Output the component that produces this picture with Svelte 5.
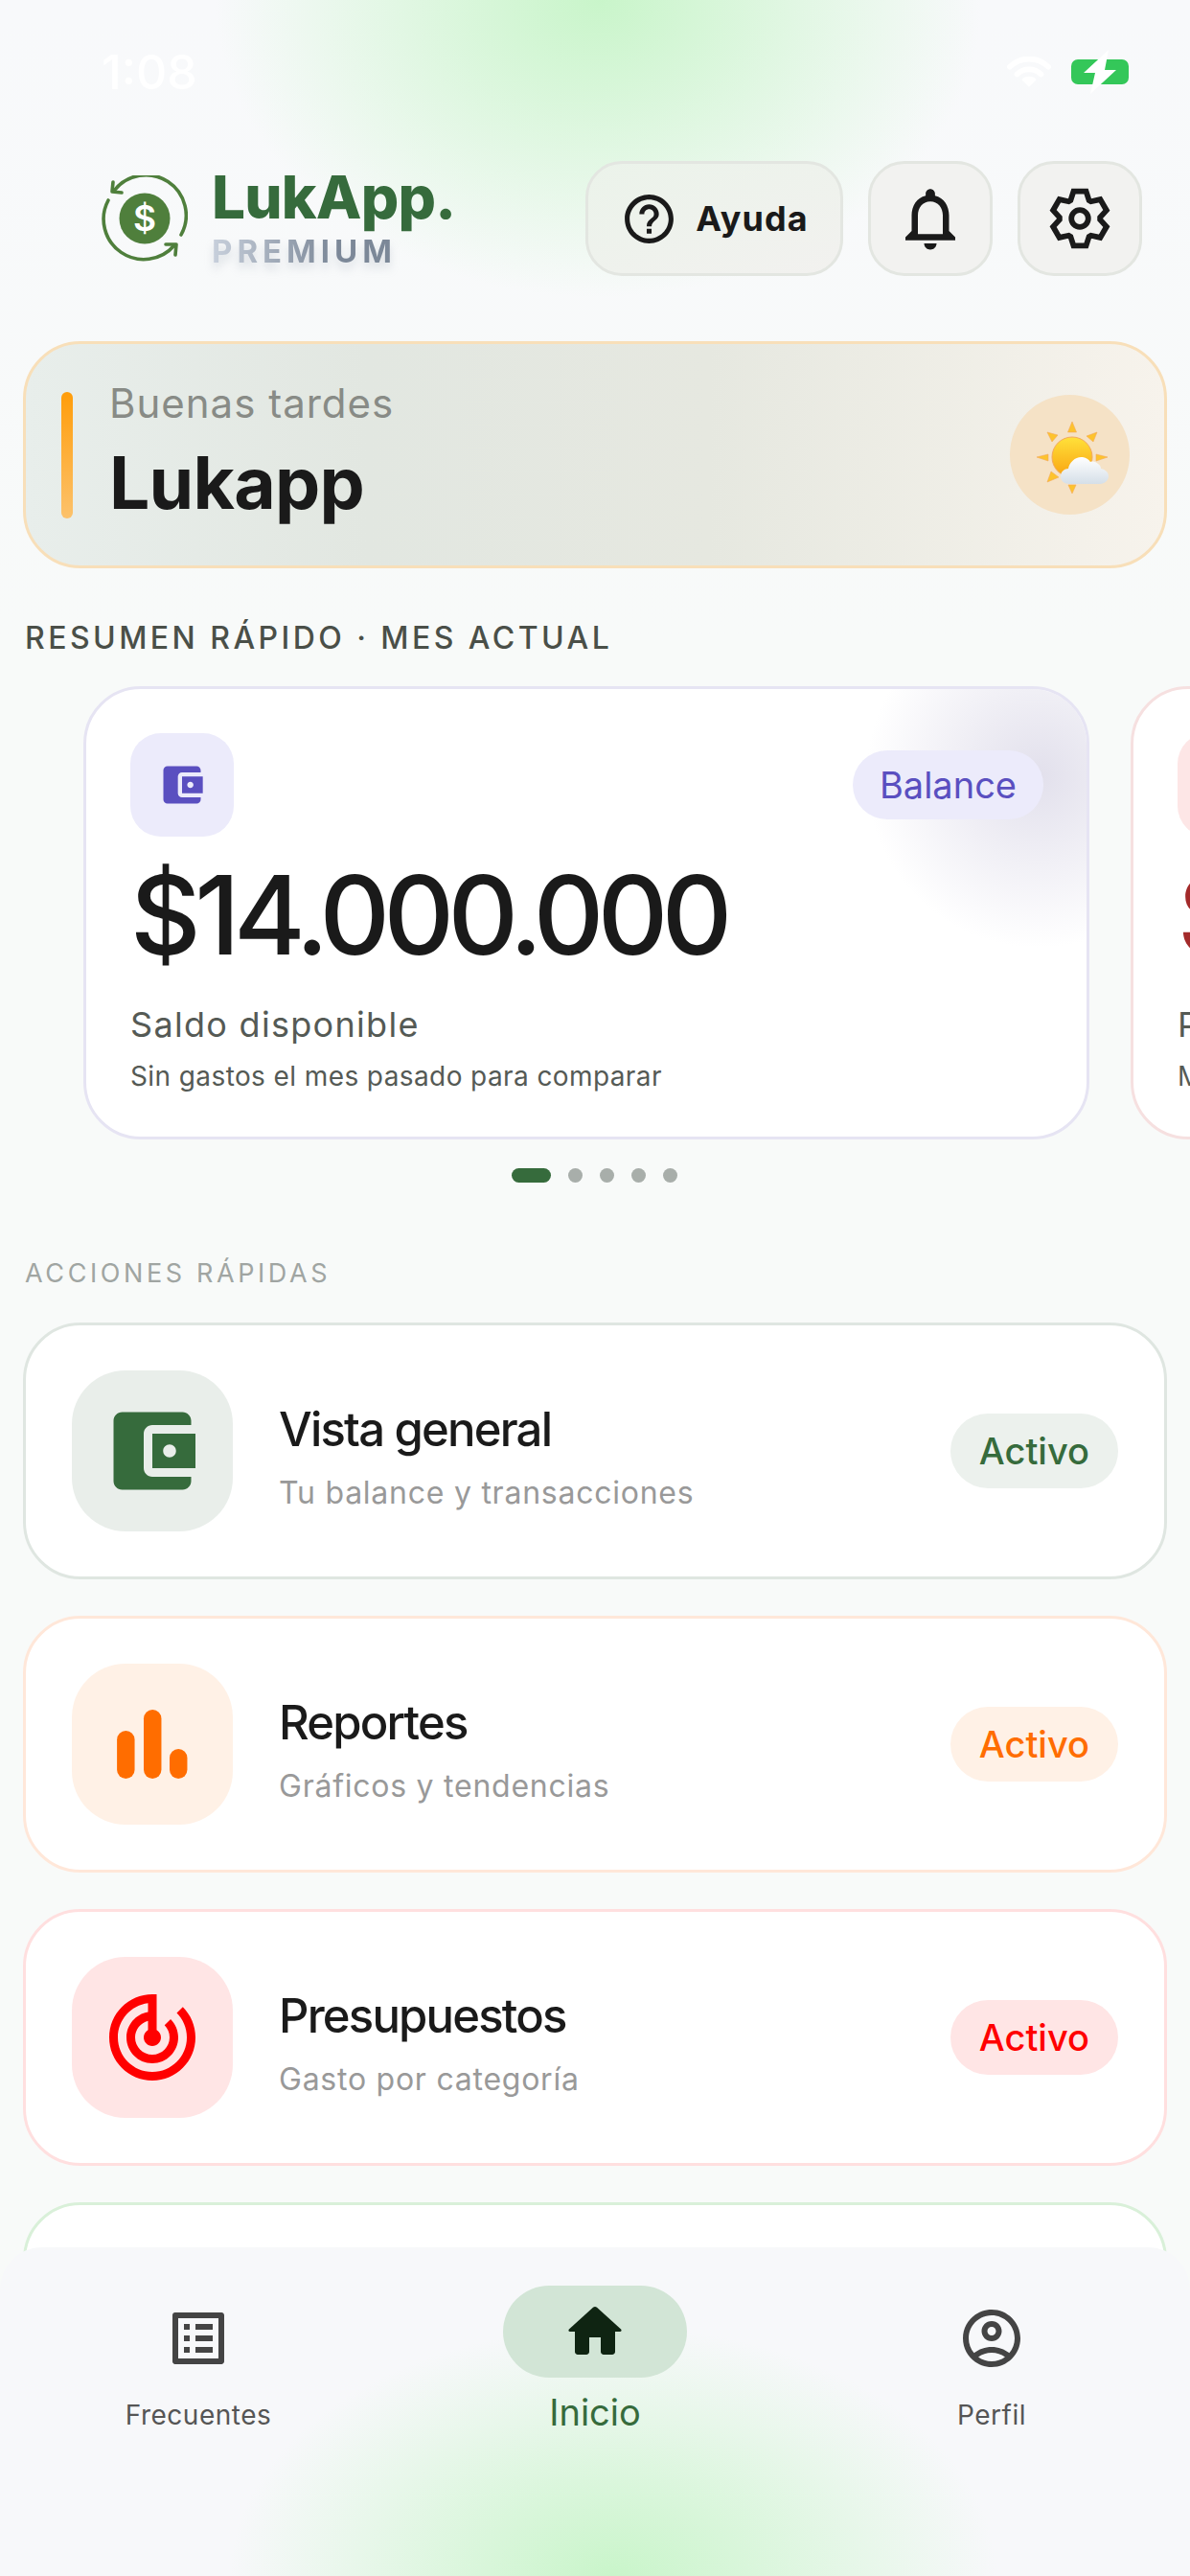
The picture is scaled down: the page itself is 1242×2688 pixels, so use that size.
<script>
	const actions = [
		{ title: 'Vista general', sub: 'Tu balance y transacciones', tone: 'green', icon: 'wallet' },
		{ title: 'Reportes', sub: 'Gráficos y tendencias', tone: 'orange', icon: 'bars' },
		{ title: 'Presupuestos', sub: 'Gasto por categoría', tone: 'red', icon: 'radar' }
	]
	const wallet = 'M21 18v1c0 1.1-.9 2-2 2H5c-1.11 0-2-.9-2-2V5c0-1.1.89-2 2-2h14c1.1 0 2 .9 2 2v1h-9c-1.11 0-2 .9-2 2v8c0 1.1.89 2 2 2h9zm-9-2h10V8H12v8zm4-2.5c-.83 0-1.5-.67-1.5-1.5s.67-1.5 1.5-1.5 1.5.67 1.5 1.5-.67 1.5-1.5 1.5z'
	const radar = 'M19.07 4.93l-1.41 1.41C19.1 7.79 20 9.79 20 12c0 4.42-3.58 8-8 8s-8-3.58-8-8c0-4.08 3.05-7.44 7-7.93v2.02C8.16 6.57 6 9.03 6 12c0 3.31 2.69 6 6 6s6-2.69 6-6c0-1.66-.67-3.16-1.76-4.24l-1.41 1.41C15.55 9.9 16 10.9 16 12c0 2.21-1.79 4-4 4s-4-1.79-4-4c0-1.86 1.28-3.41 3-3.86v2.14c-.6.35-1 .98-1 1.72 0 1.1.9 2 2 2s2-.9 2-2c0-.74-.4-1.38-1-1.72V2h-1C6.48 2 2 6.48 2 12s4.48 10 10 10 10-4.48 10-10c0-2.76-1.12-5.26-2.93-7.07z'

	// six flat teeth, built instead of hand-typed
	const polar = (r, deg) => {
		const a = ((deg - 90) * Math.PI) / 180
		return `${(12 + r * Math.cos(a)).toFixed(2)} ${(12 + r * Math.sin(a)).toFixed(2)}`
	}
	const cog = [0, 60, 120, 180, 240, 300]
		.map((t) => [polar(7.7, t - 27), polar(10.6, t - 13), polar(10.6, t + 13), polar(7.7, t + 27)].join(' L'))
		.join(' L')
</script>

<div class="screen">
	<div class="glow glow-top"></div>

	<div class="status">
		<span class="time">1:08</span>
		<div class="status-icons">
			<svg class="wifi" viewBox="0 0 48 34" aria-hidden="true">
				<path d="M3 11a30 30 0 0 1 42 0M11 19a19 19 0 0 1 26 0" fill="none" stroke="#fff" stroke-width="6" stroke-linecap="round" />
				<path d="M24 33l-8-8a11 11 0 0 1 16 0z" fill="#fff" />
			</svg>
			<svg class="battery" viewBox="0 0 66 32" aria-hidden="true">
				<rect x="3" y="3" width="60" height="26" rx="7" fill="#34c759" />
				<path d="M42 -7L16 17H28L23 39L50 14H38z" fill="#fff" />
			</svg>
		</div>
	</div>

	<header class="top">
		<div class="brand">
			<svg class="logo" viewBox="0 0 90 90" aria-hidden="true">
				<circle cx="45" cy="45" r="26.500" fill="#4f7f3c" />
				<text x="45" y="58" text-anchor="middle" class="logo-sign">$</text>
				<g fill="none" stroke="#4f7f3c" stroke-width="3.600" stroke-linecap="round" stroke-linejoin="round">
					<path d="M13 16A42 42 0 0 1 83 62" />
					<path d="M7 26A42 42 0 0 0 76 73" />
					<path d="M12 7L11 17L21 18" />
					<path d="M67 72L78 72L77 83" />
				</g>
			</svg>
			<div class="brand-text">
				<span class="brand-name">LukApp.</span>
				<span class="brand-tier">PREMIUM</span>
			</div>
		</div>
		<div class="top-actions">
			<button class="top-btn help">
				<svg viewBox="0 0 24 24" width="61" height="61" aria-hidden="true"><path d="M11 18h2v-2h-2v2zm1-16C6.48 2 2 6.48 2 12s4.48 10 10 10 10-4.48 10-10S17.520 2 12 2zm0 18c-4.410 0-8-3.590-8-8s3.590-8 8-8 8 3.590 8 8-3.590 8-8 8zm0-14c-2.210 0-4 1.790-4 4h2c0-1.100.9-2 2-2s2 .9 2 2c0 2-3 1.750-3 5h2c0-2.250 3-2.500 3-5 0-2.210-1.790-4-4-4z" /></svg>
				<span>Ayuda</span>
			</button>
			<button class="top-btn square" aria-label="Notificaciones">
				<svg viewBox="0 0 24 24" width="78" height="78" aria-hidden="true"><path d="M12 22c1.100 0 2-.9 2-2h-4c0 1.100.9 2 2 2zm6-6v-5c0-3.070-1.630-5.640-4.500-6.320V4c0-.83-.67-1.500-1.500-1.500s-1.500.67-1.500 1.500v.68C7.640 5.360 6 7.920 6 11v5l-2 2v1h16v-1l-2-2zm-2 1H8v-6c0-2.480 1.510-4.500 4-4.500s4 2.020 4 4.500v6z" /></svg>
			</button>
			<button class="top-btn square" aria-label="Ajustes">
				<svg class="gear" viewBox="0 0 24 24" width="66" height="66" aria-hidden="true">
					<path d="M{cog}Z" />
					<circle cx="12" cy="12" r="3.200" />
				</svg>
			</button>
		</div>
	</header>

	<section class="greeting">
		<div class="greeting-bar"></div>
		<div class="greeting-text">
			<span class="hello">Buenas tardes</span>
			<span class="who">Lukapp</span>
		</div>
		<div class="weather">
			<svg viewBox="0 0 76 76" width="76" height="76" aria-hidden="true">
				<defs>
					<linearGradient id="sun" x1="0" y1="0" x2="0" y2="1"><stop offset="0" stop-color="#ffe13a" /><stop offset="1" stop-color="#f9a311" /></linearGradient>
					<linearGradient id="cloud" x1="0" y1="0" x2="0" y2="1"><stop offset="0" stop-color="#fff" /><stop offset="1" stop-color="#d5dfe8" /></linearGradient>
				</defs>
				<g transform="translate(3 3)">
					<g fill="#fdc32d" stroke="#f3a95c" stroke-width=".6">
						<path d="M37 0l4.500 11h-9z" /><path d="M11 11l11 3-6 7z" /><path d="M63 11l-4 10-7-6z" />
						<path d="M0 37l12-3v7z" /><path d="M74 37l-12-3v7z" /><path d="M11 63l4-11 8 6z" /><path d="M37 75l-4-9h8z" />
					</g>
					<circle cx="37" cy="37" r="21" fill="url(#sun)" stroke="#f3a95c" />
				</g>
				<path transform="translate(6 -1)" d="M31 69c-5 0-9-3-9-8 0-5 4-8 8-8 1-7 8-13 15-12 4 .5 7 3 8 5 3-1 6 0 8 2 2 1 3 3 3 5 5 1 8 4 8 8 0 4-4 8-9 8z" fill="url(#cloud)" />
			</svg>
		</div>
	</section>

	<h2 class="summary-title">RESUMEN RÁPIDO · MES ACTUAL</h2>

	<div class="carousel">
		<article class="stat balance">
			<div class="stat-head">
				<div class="stat-icon">
					<svg viewBox="0 0 24 24" width="52" height="52" aria-hidden="true"><path d={wallet} /></svg>
				</div>
				<span class="stat-tag">Balance</span>
			</div>
			<div class="amount">$14.000.000</div>
			<div class="stat-label">Saldo disponible</div>
			<div class="stat-note">Sin gastos el mes pasado para comparar</div>
		</article>
		<article class="stat spent">
			<div class="stat-head">
				<div class="stat-icon"></div>
			</div>
			<div class="amount">$0</div>
			<div class="stat-label">Por pagar</div>
			<div class="stat-note">Mes actual</div>
		</article>
	</div>

	<div class="dots">
		<span class="dot active"></span><span class="dot"></span><span class="dot"></span><span class="dot"></span><span class="dot"></span>
	</div>

	<h2 class="actions-title">ACCIONES RÁPIDAS</h2>

	<div class="actions">
		{#each actions as a}
			<article class="action {a.tone}">
				<div class="action-icon">
					{#if a.icon === 'wallet'}
						<svg viewBox="0 0 24 24" width="108" height="108" aria-hidden="true"><path d={wallet} /></svg>
					{:else if a.icon === 'radar'}
						<svg viewBox="0 0 24 24" width="108" height="108" aria-hidden="true"><path d={radar} /></svg>
					{:else}
						<svg viewBox="0 0 24 24" width="108" height="108" aria-hidden="true">
							<rect x="3.800" y="8.900" width="4.100" height="11.100" rx="2.050" />
							<rect x="10" y="4" width="4.100" height="16" rx="2.050" />
							<rect x="16" y="13.100" width="4.100" height="6.900" rx="2.050" />
						</svg>
					{/if}
				</div>
				<div class="action-text">
					<span class="action-title">{a.title}</span>
					<span class="action-sub">{a.sub}</span>
				</div>
				<span class="action-pill">Activo</span>
			</article>
		{/each}
		<article class="action mint"></article>
	</div>

	<nav class="tabbar">
		<div class="glow glow-bottom"></div>
		<div class="tab">
			<div class="tab-icon"><svg viewBox="0 0 24 24" width="72" height="72" aria-hidden="true"><path d="M19 5v14H5V5h14m1.100-2H3.900c-.5 0-.9.4-.9.9v16.200c0 .4.4.9.9.9h16.200c.4 0 .9-.5.9-.9V3.900c0-.5-.5-.9-.9-.9zM11 7h6v2h-6V7zm0 4h6v2h-6v-2zm0 4h6v2h-6zM7 7h2v2H7zm0 4h2v2H7zm0 4h2v2H7z" /></svg></div>
			<span class="tab-label">Frecuentes</span>
		</div>
		<div class="tab current">
			<div class="tab-icon"><svg viewBox="0 0 24 24" width="72" height="72" aria-hidden="true"><path d="M10 19v-5h4v5c0 .55.45 1 1 1h3c.55 0 1-.45 1-1v-7h1.700c.46 0 .68-.57.33-.87L12.670 3.600c-.38-.34-.96-.34-1.340 0l-8.360 7.530c-.34.3-.13.87.33.87H5v7c0 .55.45 1 1 1h3c.55 0 1-.45 1-1z" /></svg></div>
			<span class="tab-label">Inicio</span>
		</div>
		<div class="tab">
			<div class="tab-icon"><svg viewBox="0 0 24 24" width="72" height="72" aria-hidden="true"><path d="M12 2C6.480 2 2 6.480 2 12s4.480 10 10 10 10-4.480 10-10S17.520 2 12 2zM7.350 18.500C8.660 17.560 10.260 17 12 17s3.340.56 4.650 1.500C15.340 19.440 13.740 20 12 20s-3.340-.56-4.650-1.500zm10.790-1.380C16.450 15.800 14.320 15 12 15s-4.450.8-6.140 2.120C4.700 15.730 4 13.950 4 12c0-4.420 3.580-8 8-8s8 3.580 8 8c0 1.950-.7 3.730-1.860 5.120zM12 6c-1.930 0-3.500 1.570-3.500 3.500S10.070 13 12 13s3.500-1.570 3.500-3.500S13.930 6 12 6zm0 5c-.83 0-1.500-.67-1.500-1.500S11.170 8 12 8s1.500.67 1.500 1.500S12.830 11 12 11z" /></svg></div>
			<span class="tab-label">Perfil</span>
		</div>
	</nav>
</div>

<style>
	:global(body) {
		margin: 0;
		background: #f8f9fa;
	}

	.screen {
		position: relative;
		width: 1242px;
		height: 2688px;
		overflow: hidden;
		background: linear-gradient(180deg, #f8f9fb, #f8faf9 25%);
		font-family: Inter, 'Liberation Sans', sans-serif;
		color: #1a1a1a;
	}

	.glow {
		position: absolute;
		left: 225px;
		width: 800px;
		height: 620px;
		pointer-events: none;
	}

	.glow-top {
		top: -310px;
		background: radial-gradient(closest-side, #c9f5ca 0%, rgba(201, 245, 202, 0.55) 45%, rgba(201, 245, 202, 0) 100%);
	}

	.glow-bottom {
		top: 83px;
		left: 240px;
		height: 520px;
		background: radial-gradient(closest-side, #c9f5ca 0%, rgba(201, 245, 202, 0.55) 45%, rgba(201, 245, 202, 0) 100%);
	}

	.status {
		position: relative;
		display: flex;
		align-items: center;
		justify-content: space-between;
		height: 150px;
		padding: 0 61px 0 106px;
		box-sizing: border-box;
	}

	.time {
		font-size: 50px;
		font-weight: 500;
		color: #fff;
	}

	.status-icons {
		display: flex;
		align-items: center;
		gap: 18px;
	}

	.wifi {
		width: 46px;
		height: 33px;
	}

	.battery {
		width: 66px;
		height: 32px;
		overflow: visible;
	}

	.top {
		position: relative;
		display: flex;
		align-items: center;
		justify-content: space-between;
		padding: 18px 50px 0 106px;
	}

	.brand {
		display: flex;
		align-items: center;
		gap: 25px;
	}

	.logo {
		width: 90px;
		height: 90px;
	}

	.logo-sign {
		font-size: 37px;
		font-weight: 600;
		fill: #fff;
	}

	.brand-text {
		display: flex;
		flex-direction: column;
	}

	.brand-name {
		font-size: 62px;
		font-weight: 800;
		line-height: 66px;
		color: #366b3c;
		letter-spacing: -0.800px;
	}

	.brand-tier {
		margin-top: 2px;
		font-size: 33px;
		font-weight: 700;
		line-height: 42px;
		letter-spacing: 5px;
		background: linear-gradient(90deg, #c8d0dc, #7c8898 50%, #7c8898);
		background-clip: text;
		-webkit-background-clip: text;
		color: transparent;
		filter: drop-shadow(0 7px 5px rgba(120, 130, 150, 0.22));
	}

	.top-actions {
		display: flex;
		gap: 26px;
	}

	.top-btn {
		display: flex;
		align-items: center;
		justify-content: center;
		gap: 18px;
		height: 120px;
		padding: 0;
		border: 3px solid #e3e6e1;
		border-radius: 38px;
		background: #f2f2f0;
		font-family: inherit;
		color: #1a1a1a;
	}

	.top-btn svg {
		fill: #1a1a1a;
	}

	.top-btn .gear {
		fill: none;
		stroke: #1a1a1a;
		stroke-width: 2.100;
		stroke-linejoin: miter;
	}

	.help {
		width: 269px;
		background: linear-gradient(160deg, #ebf3ea, #f2f1ef);
		font-size: 36px;
		font-weight: 700;
		letter-spacing: 1.100px;
	}

	.square {
		width: 130px;
	}

	.greeting {
		position: relative;
		display: flex;
		align-items: center;
		box-sizing: border-box;
		height: 237px;
		margin: 68px 24px 0;
		padding: 0 36px 0 37px;
		border: 3px solid #f8dfb9;
		border-radius: 60px;
		background: linear-gradient(90deg, #e8eeeb 0%, #e2e7e1 30%, #e6e8e0 60%, #f7f3ec 100%);
	}

	.greeting-bar {
		width: 12px;
		height: 132px;
		border-radius: 6px;
		background: linear-gradient(180deg, #ff9d0a, #fcc26c);
	}

	.greeting-text {
		display: flex;
		flex: 1;
		flex-direction: column;
		margin-left: 38px;
		padding-bottom: 7px;
	}

	.hello {
		font-size: 42px;
		line-height: 48px;
		color: #888b86;
		letter-spacing: 1px;
	}

	.who {
		margin-top: 17px;
		font-size: 75px;
		font-weight: 700;
		line-height: 84px;
		letter-spacing: -0.800px;
	}

	.weather {
		display: flex;
		align-items: center;
		justify-content: center;
		width: 125px;
		height: 125px;
		border-radius: 50%;
		background: #f5e2c6;
	}

	.weather svg {
		overflow: visible;
	}

	.summary-title {
		margin: 53px 0 0 26px;
		font-size: 32px;
		font-weight: 500;
		line-height: 40px;
		letter-spacing: 3.450px;
		color: #4a4f48;
	}

	.carousel {
		display: flex;
		gap: 43px;
		margin-top: 30px;
		padding-left: 87px;
		overflow: hidden;
	}

	.stat {
		position: relative;
		flex: none;
		box-sizing: border-box;
		width: 1050px;
		height: 473px;
		padding: 46px 45px 0 46px;
		border: 3px solid #e6e4f3;
		border-radius: 60px;
		background: #fff;
		overflow: hidden;
	}

	.balance::before {
		content: '';
		position: absolute;
		top: -90px;
		right: -130px;
		width: 360px;
		height: 360px;
		background: radial-gradient(closest-side, #e2e0ec, rgba(226, 224, 236, 0));
	}

	.spent {
		border-color: #f6e0e0;
	}

	.stat-head {
		position: relative;
		display: flex;
		align-items: flex-start;
		justify-content: space-between;
	}

	.stat-icon {
		display: flex;
		align-items: center;
		justify-content: center;
		width: 108px;
		height: 108px;
		border-radius: 32px;
		background: #ecebfb;
	}

	.stat-icon svg {
		fill: #5a4fc0;
	}

	.spent .stat-icon {
		background: #fde6e6;
	}

	.stat-tag {
		margin-top: 18px;
		padding: 0 28px;
		border-radius: 36px;
		background: #ecebfb;
		font-size: 38px;
		line-height: 72px;
		color: #5a4fc0;
	}

	.amount {
		position: relative;
		margin-top: 17px;
		font-size: 114px;
		font-weight: 500;
		line-height: 130px;
		letter-spacing: -6.500px;
	}

	.spent .amount {
		color: #a32a2a;
	}

	.stat-label {
		margin-top: 27px;
		font-size: 36px;
		line-height: 44px;
		color: #555a55;
		letter-spacing: 1.300px;
	}

	.stat-note {
		margin-top: 14px;
		font-size: 28px;
		line-height: 36px;
		color: #555a55;
		letter-spacing: 0.400px;
	}

	.dots {
		display: flex;
		justify-content: center;
		align-items: center;
		gap: 18px;
		margin: 30px 0 0 -2px;
	}

	.dot {
		width: 15px;
		height: 15px;
		border-radius: 50%;
		background: #a8aeaa;
	}

	.dot.active {
		width: 41px;
		border-radius: 8px;
		background: #366b3c;
	}

	.actions-title {
		margin: 78px 0 0 26px;
		font-size: 27px;
		font-weight: 400;
		line-height: 34px;
		letter-spacing: 3.600px;
		color: #a0a5a2;
	}

	.actions {
		display: flex;
		flex-direction: column;
		gap: 38px;
		margin: 34px 24px 0;
	}

	.action {
		display: flex;
		flex: none;
		align-items: center;
		box-sizing: border-box;
		height: 268px;
		padding: 0 48px;
		border: 3px solid #dfe6e1;
		border-radius: 60px;
		background: #fff;
	}

	.action-icon {
		display: flex;
		align-items: center;
		justify-content: center;
		flex: none;
		width: 168px;
		height: 168px;
		border-radius: 56px;
	}

	.action-text {
		display: flex;
		flex: 1;
		flex-direction: column;
		margin-left: 48px;
		padding-top: 11px;
	}

	.action-title {
		font-size: 49px;
		font-weight: 500;
		line-height: 60px;
		letter-spacing: -1.800px;
	}

	.action-sub {
		margin-top: 16px;
		font-size: 32px;
		line-height: 40px;
		color: #999;
		letter-spacing: 0.750px;
	}

	.action-pill {
		padding: 0 30px;
		border-radius: 39px;
		font-size: 38px;
		font-weight: 500;
		line-height: 78px;
	}

	.green { border-color: #dfe6e1; }
	.green .action-icon { background: #e9eeea; fill: #366b3c; }
	.green .action-pill { background: #ecf1ed; color: #366b3c; }

	.orange { border-color: #ffe7d9; }
	.orange .action-icon { background: #fff1e6; fill: #ff6d00; }
	.orange .action-pill { background: #fff1e6; color: #ff6d00; }

	.red { border-color: #ffdfdf; }
	.red .action-icon { background: #ffe5e5; fill: #f00; }
	.red .action-pill { background: #ffe5e5; color: #f00; }

	.mint { border-color: #d9f0d9; }

	.tabbar {
		position: absolute;
		left: 0;
		right: 0;
		bottom: 0;
		display: grid;
		grid-template-columns: repeat(3, 1fr);
		height: 343px;
		border-radius: 44px 44px 0 0;
		background: #f7f8fa;
		overflow: hidden;
	}

	.tab {
		position: relative;
		display: flex;
		flex-direction: column;
		align-items: center;
		padding-top: 47px;
		color: #444;
	}

	.tab-icon {
		display: flex;
		align-items: center;
		justify-content: center;
		width: 192px;
		height: 96px;
		border-radius: 48px;
		fill: #444;
	}

	.tab-label {
		margin-top: 15px;
		font-size: 28px;
		line-height: 34px;
		letter-spacing: 0.500px;
		color: #555;
	}

	.current {
		padding-top: 40px;
	}

	.current .tab-icon {
		background: #d2e5d6;
		fill: #0f2412;
	}

	.current .tab-label {
		margin-top: 13px;
		font-size: 38px;
		line-height: 46px;
		letter-spacing: 0;
		color: #366b3c;
	}
</style>
